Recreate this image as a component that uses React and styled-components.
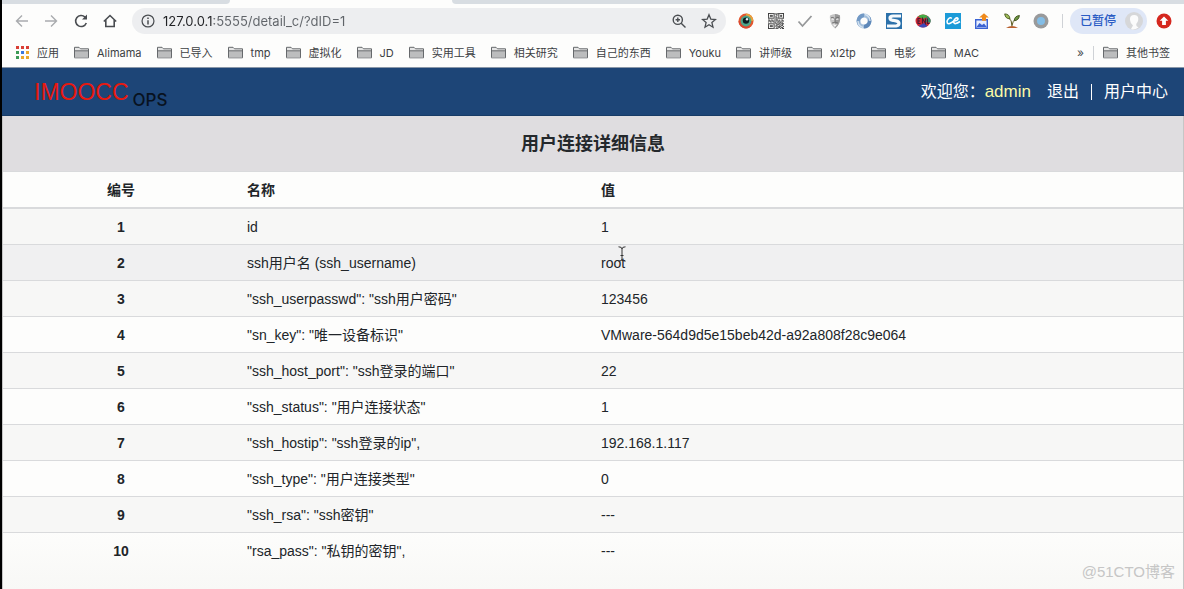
import React from 'react'
import styled, { createGlobalStyle, css } from 'styled-components'

const latin = '"Liberation Sans", "Noto Sans CJK SC", sans-serif'
const chrome = 'Inter, "Noto Sans CJK SC", sans-serif'

const GlobalStyle = createGlobalStyle`
	* {
		box-sizing: border-box;
	}

	body {
		margin: 0;
		background: #fdfdfc;
		font-family: ${latin};
		color: #212529;
	}
`

const Window = styled.div`
	position: relative;
	display: flex;
	flex-direction: column;
	min-height: 100vh;
	border-left: 2px solid #000;
	overflow: hidden;
`

const TabStrip = styled.div`
	display: flex;
	height: 4px;
`

const TabGap = styled.div`
	flex: ${props => (props.$grow ? '1' : '0 0 228px')};
	background: #d8dde2;
	border-radius: ${props => (props.$grow ? '0 0 0 4px' : '0 0 4px 0')};
	margin-right: ${props => (props.$grow ? '0' : '222px')};
`

const Toolbar = styled.div`
	display: flex;
	align-items: center;
	height: 34px;
	padding: 0 12px;
`

const IconGroup = styled.div`
	display: flex;
	justify-content: space-between;
	flex: 0 0 ${props => props.$width};
`

const IconButton = styled.button`
	display: flex;
	padding: 0;
	border: 0;
	background: none;
	color: ${props => (props.$muted ? '#a9abae' : '#4a4d51')};
	cursor: pointer;
`

const AddressBar = styled.label`
	display: flex;
	align-items: center;
	flex: 1;
	min-width: 0;
	height: 26px;
	margin: 0 12px 0 14px;
	padding: 0 9px;
	gap: 8px;
	border-radius: 13px;
	background: #edeef0;
	color: #4a4d51;

	svg {
		flex: none;
	}
`

const AddressInput = styled.input`
	flex: 1;
	min-width: 0;
	padding: 0;
	border: 0;
	outline: 0;
	font: 13px/20px ${chrome};
	color: transparent;
	background: linear-gradient(90deg, #202124 51px, #5f6368 51px);
	-webkit-background-clip: text;
	background-clip: text;
`

const AddressActions = styled.div`
	display: flex;
	gap: 14px;
`

const Divider = styled.span`
	width: 1px;
	height: ${props => props.$height || '14px'};
	background: #cfd2d6;
`

const ToolbarDivider = styled(Divider)`
	margin-left: 13px;
`

const Profile = styled.button`
	display: flex;
	align-items: center;
	justify-content: space-between;
	width: 77px;
	height: 26px;
	margin: 0 9px 0 7px;
	padding: 0 4px 0 10px;
	border: 0;
	border-radius: 13px;
	background: #dfe7f7;
	color: #2a5bc4;
	font: 500 12px/20px ${chrome};
`

const Bookmarks = styled.nav`
	display: flex;
	align-items: center;
	gap: 15px;
	height: 29px;
	padding: 0 14px;
`

const Bookmark = styled.a`
	display: flex;
	align-items: center;
	gap: 8px;
	color: #3c4043;
	font: 11px/16px ${chrome};
	text-decoration: none;
	white-space: nowrap;
`

const BookmarksEnd = styled.div`
	display: flex;
	align-items: center;
	gap: 9px;
	margin-left: auto;
`

const Overflow = styled(IconButton)`
	font: 12px/16px ${chrome};
`

const Header = styled.header`
	display: flex;
	align-items: center;
	justify-content: space-between;
	height: 49px;
	padding: 0 16px 0 32px;
	border-top: 1px solid #8a97a8;
	border-bottom: 1px solid #173b66;
	background: #1d4577;
`

const Logo = styled.a`
	display: flex;
	align-items: baseline;
	gap: 4px;
	color: #e8190f;
	font: 23px/32px ${latin};
	text-decoration: none;
`

const LogoSub = styled.span`
	align-self: flex-end;
	color: #08121f;
	font: 500 17px/16px ${chrome};
`

const UserMenu = styled.div`
	display: flex;
	align-items: center;
	color: #fff;
	font: 16px/24px ${latin};
`

const UserName = styled.span`
	margin-right: 16px;
	color: #fbfaa5;
	font-size: 17px;
`

const MenuLink = styled.a`
	color: #fff;
	text-decoration: none;
`

const MenuDivider = styled(Divider)`
	margin: 0 12px;
	background: #fff;
`

const Main = styled.main`
	flex: 1;
	border: solid #c6c6c6;
	border-width: 0 1px;
	background: linear-gradient(to top, #f8f8f6, #fdfdfc 60px);
`

const Title = styled.h1`
	margin: 0;
	padding: 15px 0 13px;
	background: #dfdde0;
	color: #24282c;
	font-size: 18px;
	line-height: 27px;
	text-align: center;
`

const Table = styled.table`
	width: 100%;
	border-collapse: collapse;
	table-layout: fixed;
	font-size: 14px;
	line-height: 19px;
`

const cell = css`
	padding: 9px 8px 7px;
	border-top: 1px solid #d9dadc;
	text-align: left;
`

const HeadCell = styled.th`
	${cell}
	width: ${props => props.$width};
	border-bottom: 2px solid #d9dadc;
	text-align: ${props => (props.$center ? 'center' : 'left')};
`

const Row = styled.tr`
	background: ${props => (props.$hovered ? '#f0f0f1' : 'transparent')};

	&:nth-child(odd) {
		background: #f7f7f6;
	}
`

const IndexCell = styled.th`
	${cell}
	text-align: center;
`

const Cell = styled.td`
	${cell}
`

const Hovered = styled.span`
	position: relative;
`

const Caret = styled.svg`
	position: absolute;
	left: 17px;
	top: -9px;
`

const Watermark = styled.div`
	position: absolute;
	right: 9px;
	bottom: 6px;
	color: #c6c6c6;
	font: 15px/22px ${latin};
`

const Svg = ({ size = 16, children, ...rest }) => (
	<svg width={size} height={size} viewBox="0 0 16 16" fill="none" stroke="currentColor" strokeWidth="1.4" aria-hidden="true" {...rest}>
		{children}
	</svg>
)

const FolderIcon = () => (
	<svg width="15" height="13" viewBox="0 0 15 13" fill="none" stroke="#66696c" aria-hidden="true">
		<path d="M.5 11.5V1.3H5l1.500 1.500h8v9H.5z" fill="#e6e6e6" />
		<path d="M1 5h13v6.500H1z" fill="#bcbdbe" stroke="none" />
		<path d="M.5 4.800h14" />
	</svg>
)

const appColors = ['#d93f35', '#d93f35', '#d93f35', '#3c9a56', '#3a78dd', '#e9a72c', '#3c9a56', '#e9a72c', '#e9a72c']

const AppsIcon = () => (
	<svg width="13" height="13" viewBox="0 0 13 13" aria-hidden="true">
		{appColors.map((color, i) => (
			<rect key={i} x={(i % 3) * 5} y={Math.floor(i / 3) * 5} width="3" height="3" fill={color} />
		))}
	</svg>
)

const navIcons = [
	{ label: '后退', muted: true, icon: <Svg><path d="M14 8H3M8 2.5 2.5 8 8 13.5" /></Svg> },
	{ label: '前进', muted: true, icon: <Svg><path d="M2 8h11M8 2.5 13.5 8 8 13.5" /></Svg> },
	{ label: '重新加载', icon: <Svg><path d="M13.3 10A5.5 5.5 0 1 1 12 4.100L13.2 5.300" strokeWidth="1.6" /><path d="M14 1.5v5H9z" fill="currentColor" stroke="none" /></Svg> },
	{ label: '主页', icon: <Svg><path d="M1.8 8.5 8 2.5l6.200 6M3.800 7v6.500h8.400V7" strokeWidth="1.6" /></Svg> }
]

const qr = [
	'11111110101111111', '10000010110100001', '10111010010101101', '10111010100101101',
	'10000010110100001', '11111110101111111', '00000000110000000', '11011011011010110',
	'01101100110110011', '10110111001101100', '00000001101011010', '11111110110110111',
	'10000010011101010', '10111010110010110', '10111010101111001', '10000010010110110', '11111110111001011'
]

const extensions = [
	{
		label: '取色器',
		icon: (
			<Svg stroke="none">
				<circle cx="8" cy="8" r="7.5" fill="#e4572f" />
				<path d="M8 .5A7.5 7.5 0 0 1 15.5 8L8 8z" fill="#e9a13a" />
				<path d="M.5 8A7.5 7.5 0 0 0 12 14.3L8 8z" fill="#d9482f" />
				<circle cx="8" cy="8" r="5.4" fill="#4fa58a" />
				<circle cx="8" cy="7.6" r="3.2" fill="#0b1d22" />
				<circle cx="9" cy="6.3" r="1.2" fill="#e8f4f4" />
			</Svg>
		)
	},
	{
		label: '二维码',
		icon: (
			<svg width="16" height="16" viewBox="0 0 17 17" aria-hidden="true">
				{qr.map((line, y) => line.split('').map((bit, x) => (
					bit === '1' ? <rect key={`${x}-${y}`} x={x} y={y} width="1" height="1" fill="#252525" /> : null
				)))}
			</svg>
		)
	},
	{ label: '检查', icon: <Svg stroke="#969899" strokeWidth="1.8"><path d="m1.5 8.500 4 4.500 9-10" /></Svg> },
	{
		label: '面具',
		icon: (
			<Svg stroke="none">
				<path d="M3 2.5Q8-.5 13 2.5 14 11 8 15.5 2 11 3 2.5z" fill="#c4c4c4" />
				<path d="M8 1Q11 1 13 2.5 14 11 8 15.5z" fill="#9a9a9a" />
				<path d="M4 6q2-1.200 3.200.3Q5.5 7.500 4 6zM8.800 6.300Q10 4.800 12 6q-1.500 1.500-3.200.3zM5.500 11q2.500 1 5 0L8 14z" fill="#f4f4f4" />
				<path d="M4 4.800q2-1 3.500.6M8.500 5.400Q10 3.800 12 4.800M8 6v3M5 10q3-1.500 6 0" stroke="#6c6c6c" strokeWidth=".9" />
			</Svg>
		)
	},
	{
		label: '同步',
		icon: (
			<Svg stroke="none">
				<circle cx="8" cy="8" r="5.5" stroke="#a3bfdc" strokeWidth="4" />
				<path d="M8 .6A7.4 7.4 0 0 0 3.5 13.8Q2 6 8 4z" fill="#7299c5" />
				<path d="M8 15.4A7.4 7.4 0 0 0 12.5 2.2Q14 10 8 12z" fill="#5e88b9" />
				<path d="M9 1.5q5 1.500 5 6.500M7 14.500Q2 13 2 8" stroke="#d5e3f0" />
			</Svg>
		)
	},
	{
		label: 'S',
		icon: (
			<Svg stroke="none">
				<path d="M0 0h16v16H0z" fill="#2c71aa" />
				<path d="M15 3H7Q4 3 4 5t3 2.300l3 .6q3 .6 3 2.600T10 13H1" stroke="#f6fafc" strokeWidth="3.2" />
			</Svg>
		)
	},
	{
		label: '彩球',
		icon: (
			<Svg stroke="none">
				<ellipse cx="8" cy="8" rx="7.5" ry="6.5" fill="#cf2733" />
				<path d="M3 3.5Q8-.5 13 3.500L8 6z" fill="#43ad45" />
				<path d="M12 2.8q5 3 3.300 7L11 9z" fill="#2d8f6b" />
				<path d="M3.500 13q4.500 3.200 9 0L9 10z" fill="#3c48b8" />
				<path d="M5.500 5.500H3v5h2.500M3 8h2M7.500 10.500v-5l3 5v-5M12.500 5.500v5h2" stroke="#4a1a34" strokeWidth="1.1" />
			</Svg>
		)
	},
	{
		label: 'ce',
		icon: (
			<Svg stroke="none">
				<path d="M0 0h16v16H0z" fill="#1c9bd8" />
				<path d="M6.8 5.5Q5.3 3.900 3.300 6t-1 4q1.200 1.800 4.500-.6l2-1.400q4.200-.4 4.200-2.300-.8-1.700-2.900.1T8.800 9.600q.9 2.500 6.200-1.100" stroke="#fff" strokeWidth="1.6" />
			</Svg>
		)
	},
	{
		label: '上传图片',
		icon: (
			<Svg stroke="none">
				<path d="M1.7 6.7h11.600v8.600H1.700z" fill="#e8efff" stroke="#3b63d3" strokeWidth="1.4" />
				<path d="m2.5 14 3-4 2.500 2 2-1.500 2.800 3.500z" fill="#3b63d3" />
				<path d="M10 .2 14.800 4.500H12v3.200H8V4.500H5.200z" fill="#f08b1d" />
			</Svg>
		)
	},
	{
		label: '幼苗',
		icon: (
			<Svg stroke="none">
				<path d="M2 15Q8 11 14 15z" fill="#b8602f" />
				<path d="M8 13Q8 7 4.5 4.500M8 12.500Q8.500 8 12 5.500" stroke="#5c5a1e" strokeWidth="1" />
				<path d="M.7.9Q5.500 1 6 5.800 1.200 5.800.7.900z" fill="#9dbb57" stroke="#4b5a1d" strokeWidth=".9" />
				<path d="M15.400 2.500Q10.500 3 10.200 7.800q4.600-.3 5.200-5.300z" fill="#6b9442" stroke="#3f501a" strokeWidth=".9" />
			</Svg>
		)
	},
	{ label: '圆点', icon: <Svg stroke="none"><circle cx="8" cy="8" r="7.5" fill="#999a9b" /><circle cx="8" cy="8" r="4" fill="#83bde6" /></Svg> }
]

const bookmarks = ['Alimama', '已导入', 'tmp', '虚拟化', 'JD', '实用工具', '相关研究', '自己的东西', 'Youku', '讲师级', 'xl2tp', '电影', 'MAC']

const rows = [
	['id', '1'],
	['ssh用户名 (ssh_username)', 'root'],
	['"ssh_userpasswd": "ssh用户密码"', '123456'],
	['"sn_key": "唯一设备标识"', 'VMware-564d9d5e15beb42d-a92a808f28c9e064'],
	['"ssh_host_port": "ssh登录的端口"', '22'],
	['"ssh_status": "用户连接状态"', '1'],
	['"ssh_hostip": "ssh登录的ip",', '192.168.1.117'],
	['"ssh_type": "用户连接类型"', '0'],
	['"ssh_rsa": "ssh密钥"', '---'],
	['"rsa_pass": "私钥的密钥",', '---']
]

const BrowserToolbar = () => (
	<Toolbar>
		<IconGroup $width="104px">
			{navIcons.map(({ label, muted, icon }) => (
				<IconButton key={label} type="button" aria-label={label} $muted={muted}>{icon}</IconButton>
			))}
		</IconGroup>
		<AddressBar>
			<Svg size={14}><circle cx="8" cy="8" r="6.8" /><path d="M8 7v5M8 4v1.700" strokeWidth="1.7" /></Svg>
			<AddressInput aria-label="地址" defaultValue="127.0.0.1:5555/detail_c/?dID=1" />
			<AddressActions>
				<IconButton type="button" aria-label="缩放">
					<Svg><circle cx="6.8" cy="6.8" r="4.6" /><path d="m10.2 10.2 4.300 4.300M6.800 4.600v4.400M4.600 6.800H9" /></Svg>
				</IconButton>
				<IconButton type="button" aria-label="收藏">
					<Svg><path d="m8 1.8 1.800 4.300 4.700.4-3.600 3.100 1.100 4.600L8 11.800l-4 2.400 1.100-4.600-3.600-3.100 4.700-.4z" strokeWidth="1.3" /></Svg>
				</IconButton>
			</AddressActions>
		</AddressBar>
		<IconGroup $width="311px">
			{extensions.map(({ label, icon }) => (
				<IconButton key={label} type="button" aria-label={label}>{icon}</IconButton>
			))}
		</IconGroup>
		<ToolbarDivider />
		<Profile type="button">
			已暂停
			<svg width="18" height="18" viewBox="0 0 18 18" aria-hidden="true">
				<circle cx="9" cy="9" r="9" fill="#d6d7d9" />
				<path d="M5 8q-.5-5 4.200-5t4 5q-.4 2.600-2 4l.3 2 2 1.500Q9 18.500 6 17l2-3.500Q5.500 12 5 8z" fill="#fbfbfb" />
			</svg>
		</Profile>
		<IconButton type="button" aria-label="更新">
			<Svg stroke="none"><circle cx="8" cy="8" r="7.5" fill="#d5281f" /><path d="m8 3.5 4.300 4.300h-2.400V12H6.100V7.800H3.700z" fill="#fff" /></Svg>
		</IconButton>
	</Toolbar>
)

const App = () => (
	<>
		<GlobalStyle />
		<Window>
			<TabStrip>
				<TabGap />
				<TabGap $grow />
			</TabStrip>
			<BrowserToolbar />
			<Bookmarks>
				<Bookmark href="#"><AppsIcon />应用</Bookmark>
				{bookmarks.map(name => (
					<Bookmark key={name} href="#"><FolderIcon />{name}</Bookmark>
				))}
				<BookmarksEnd>
					<Overflow type="button" aria-label="更多书签">»</Overflow>
					<Divider />
					<Bookmark href="#"><FolderIcon />其他书签</Bookmark>
				</BookmarksEnd>
			</Bookmarks>
			<Header>
				<Logo href="#">IMOOCC<LogoSub>OPS</LogoSub></Logo>
				<UserMenu>
					欢迎您：
					<UserName>admin</UserName>
					<MenuLink href="#">退出</MenuLink>
					<MenuDivider $height="16px" />
					<MenuLink href="#">用户中心</MenuLink>
				</UserMenu>
			</Header>
			<Main>
				<Title>用户连接详细信息</Title>
				<Table>
					<thead>
						<tr>
							<HeadCell scope="col" $width="20%" $center>编号</HeadCell>
							<HeadCell scope="col" $width="30%">名称</HeadCell>
							<HeadCell scope="col">值</HeadCell>
						</tr>
					</thead>
					<tbody>
						{rows.map(([name, value], i) => (
							<Row key={name} $hovered={value === 'root'}>
								<IndexCell scope="row">{i + 1}</IndexCell>
								<Cell>{name}</Cell>
								<Cell>
									{value === 'root' ? (
										<Hovered>
											{value}
											<Caret width="8" height="16" viewBox="0 0 8 16" fill="none" stroke="#333">
												<path d="M.5.8Q4 .8 4 3q0-2.200 3.500-2.200M4 3v10M.5 15.200Q4 15.200 4 13q0 2.200 3.500 2.200M2.500 9.500h3" />
											</Caret>
										</Hovered>
									) : value}
								</Cell>
							</Row>
						))}
					</tbody>
				</Table>
			</Main>
			<Watermark>@51CTO博客</Watermark>
		</Window>
	</>
)

export default App
